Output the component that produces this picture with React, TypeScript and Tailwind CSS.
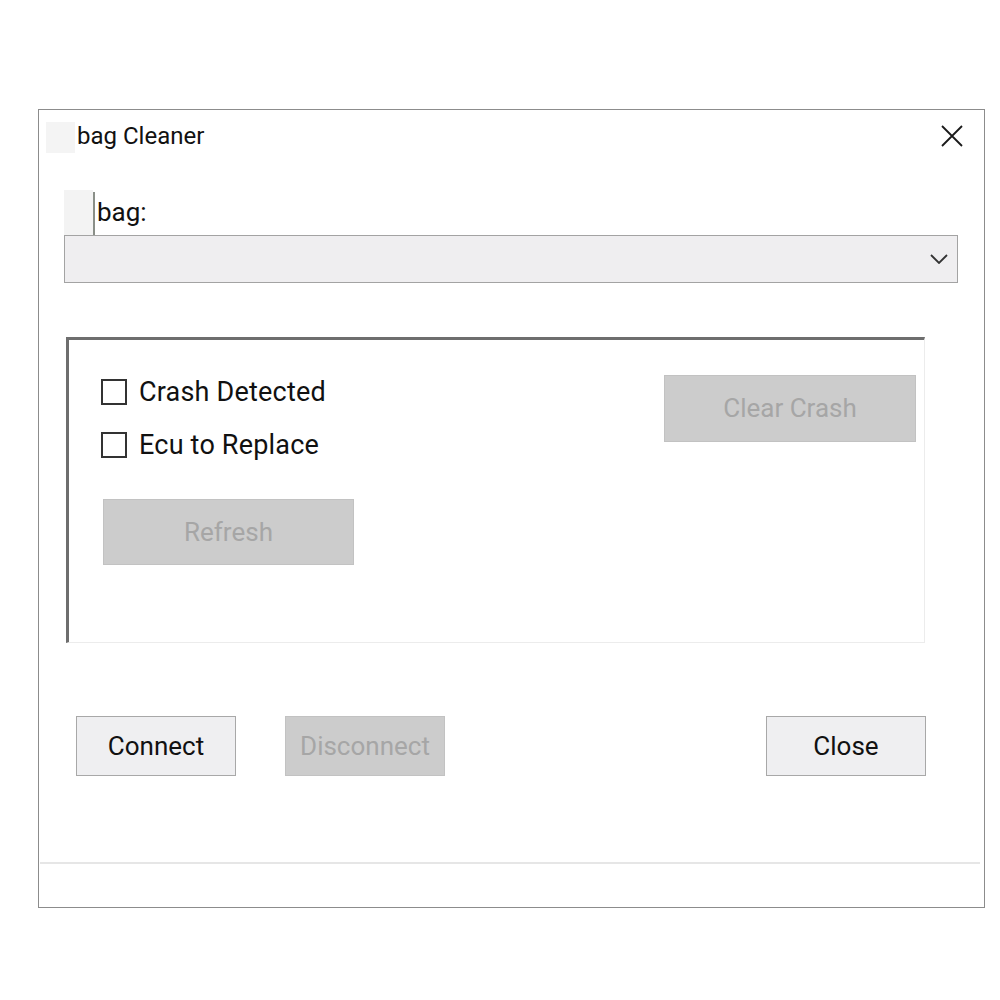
import React from "react";

const font = { fontFamily: "Roboto, 'Liberation Sans', sans-serif" };

function Checkbox({ label }: { label: string }) {
  return (
    <div className="flex items-center h-[26px]">
      <div className="w-[26px] h-[26px] border-2 border-[#333333] bg-white shrink-0" />
      <span className="ml-[12px] text-[27px] tracking-[0.2px] leading-none text-[#111111]">{label}</span>
    </div>
  );
}

function DisabledButton({ label, w, h }: { label: string; w: string; h: string }) {
  return (
    <div className={`${w} ${h} bg-[#cccccc] border border-[#c2c2c2] flex items-center justify-center text-[26px] text-[#a6a6a6]`}>
      {label}
    </div>
  );
}

export default function App() {
  return (
    <div className="w-[1000px] h-[1000px] bg-white" style={font}>
      <div className="pt-[109px] pl-[38px]">
        <div className="w-[947px] h-[799px] border border-[#8c8c8c] bg-white flex flex-col">
          {/* Title bar */}
          <div className="h-[50px] flex items-start">
            <div className="ml-[7px] mt-[12px] w-[29px] h-[31px] bg-[#f4f4f4]" />
            <span className="ml-[2px] mt-[12px] text-[24px] leading-[28px] text-[#111111]">bag Cleaner</span>
            <div className="ml-auto mr-[21px] mt-[15px]">
              <svg width="22" height="22" viewBox="0 0 22 22">
                <path d="M1 1 L21 21 M21 1 L1 21" stroke="#1a1a1a" strokeWidth="1.8" fill="none" />
              </svg>
            </div>
          </div>
          {/* label row */}
          <div className="h-[75px] flex items-end">
            <div className="ml-[25px] w-[29px] h-[45px] bg-[#f3f3f3]" />
            <div className="w-[2px] h-[43px] bg-[#8a8f88]" />
            <span className="ml-[2px] mb-[8px] text-[26px] leading-[30px] text-[#111111]">bag:</span>
          </div>
          {/* combobox */}
          <div className="ml-[25px] w-[894px] h-[48px] bg-[#efeef0] border border-[#a3a3a3] flex items-center justify-end">
            <svg width="18" height="10" viewBox="0 0 18 10" className="mr-[9px]">
              <path d="M1 1 L9 9 L17 1" stroke="#333333" strokeWidth="1.8" fill="none" />
            </svg>
          </div>
          {/* group box */}
          <div className="ml-[27px] mt-[54px] w-[859px] h-[306px] border-t-[3px] border-l-[3px] border-t-[#6e6e6e] border-l-[#6e6e6e] border-r border-b border-r-[#ececec] border-b-[#ececec] flex">
            <div className="flex flex-col pl-[32px] pt-[39px]">
              <Checkbox label="Crash Detected" />
              <div className="mt-[27px]">
                <Checkbox label="Ecu to Replace" />
              </div>
              <div className="mt-[41px] ml-[2px]">
                <DisabledButton label="Refresh" w="w-[251px]" h="h-[66px]" />
              </div>
            </div>
            <div className="ml-auto mr-[8px] pt-[35px]">
              <DisabledButton label="Clear Crash" w="w-[252px]" h="h-[67px]" />
            </div>
          </div>
          {/* buttons */}
          <div className="mt-[73px] flex items-center pl-[37px] pr-[58px]">
            <div className="w-[160px] h-[60px] bg-[#efeff1] border border-[#a8a8a8] flex items-center justify-center text-[26px] text-[#111111]">
              Connect
            </div>
            <div className="ml-[49px]">
              <DisabledButton label="Disconnect" w="w-[160px]" h="h-[60px]" />
            </div>
            <div className="ml-auto w-[160px] h-[60px] bg-[#efeff1] border border-[#a8a8a8] flex items-center justify-center text-[26px] text-[#111111]">
              Close
            </div>
          </div>
          {/* separator */}
          <div className="mt-[86px] ml-[1px] mr-[4px] h-[2px] bg-[#e6e6e6]" />
        </div>
      </div>
    </div>
  );
}
